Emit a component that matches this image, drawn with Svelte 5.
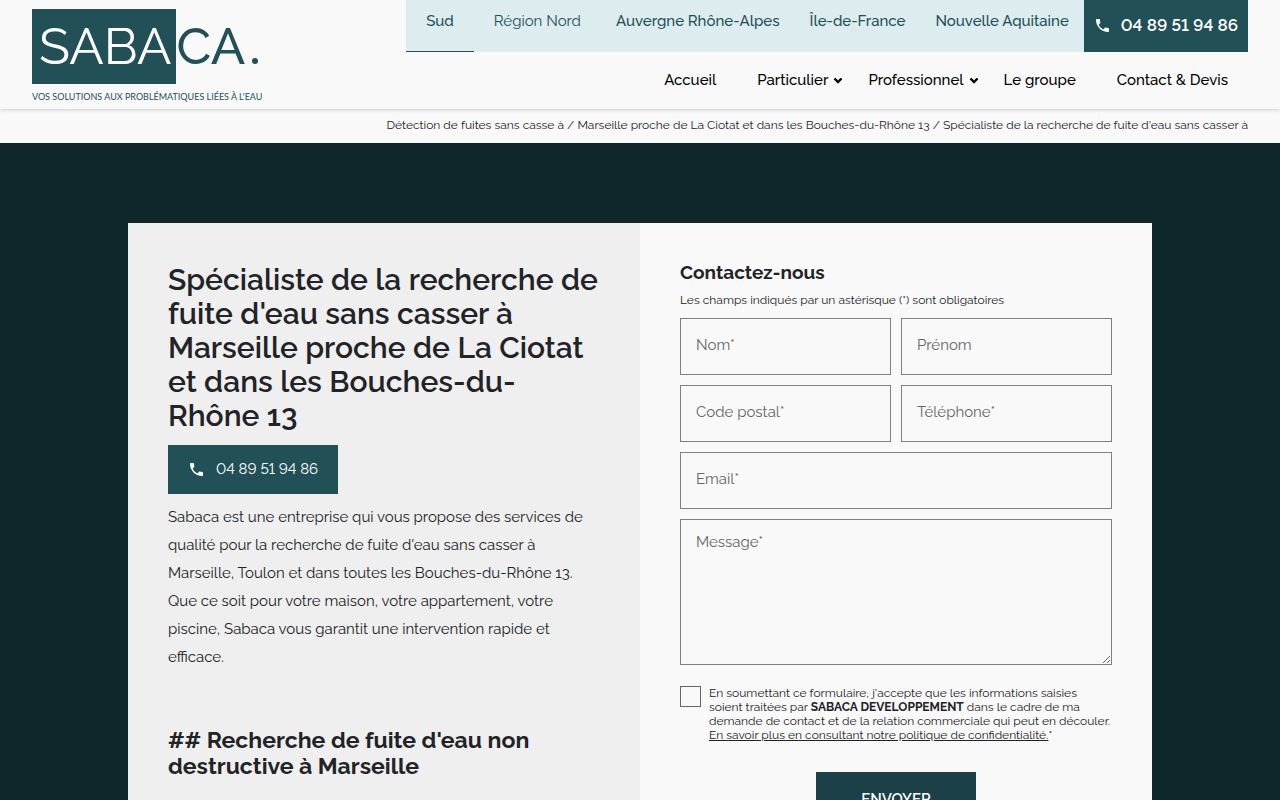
<script>
    const regions = [
        { name: 'Sud', wide: true, active: true },
        { name: 'Région Nord', wide: true },
        { name: 'Auvergne Rhône-Alpes', strong: true },
        { name: 'Île-de-France', strong: true },
        { name: 'Nouvelle Aquitaine', strong: true }
    ];

    const menu = [
        { name: 'Accueil' },
        { name: 'Particulier', sub: true },
        { name: 'Professionnel', sub: true },
        { name: 'Le groupe' },
        { name: 'Contact & Devis' }
    ];

    const fields = [
        { id: 'nom', label: 'Nom*', type: 'text' },
        { id: 'prenom', label: 'Prénom', type: 'text' },
        { id: 'cp', label: 'Code postal*', type: 'text' },
        { id: 'tel', label: 'Téléphone*', type: 'tel' },
        { id: 'email', label: 'Email*', type: 'email', full: true }
    ];

    const phone = '04 89 51 94 86';
</script>

{#snippet phoneIcon()}
    <svg class="phone-icon" viewBox="3 3 18 18" aria-hidden="true">
        <path fill="currentColor" d="M6.62 10.79c1.44 2.83 3.76 5.14 6.59 6.59l2.2-2.2c.27-.27.67-.36 1.02-.24 1.12.37 2.33.57 3.57.57.55 0 1 .45 1 1V20c0 .55-.45 1-1 1C10.61 21 3 13.39 3 4c0-.55.45-1 1-1h3.5c.55 0 1 .45 1 1 0 1.25.2 2.45.57 3.57.11.35.03.74-.25 1.02l-2.2 2.2z" />
    </svg>
{/snippet}

<header>
    <a class="logo" href="#accueil" aria-label="Sabaca">
        <span class="logo-name"><span class="logo-box">SABA</span>CA<span class="logo-dot"></span></span>
        <span class="logo-tag">VOS SOLUTIONS AUX PROBLÉMATIQUES LIÉES À L'EAU</span>
    </a>
    <div class="bars">
        <div class="top">
            <nav class="regions" aria-label="Régions">
                {#each regions as region}
                    <a href="#region" class:wide={region.wide} class:active={region.active} class:strong={region.strong}>{region.name}</a>
                {/each}
            </nav>
            <a class="call" href="tel:0489519486">{@render phoneIcon()}{phone}</a>
        </div>
        <nav class="menu" aria-label="Menu">
            {#each menu as item}
                <a href="#menu" class:sub={item.sub}>
                    {item.name}
                    {#if item.sub}
                        <svg viewBox="0 0 10 7" aria-hidden="true">
                            <path d="M1.5 1.5 5 5l3.5-3.5" fill="none" stroke="currentColor" stroke-width="2.4" />
                        </svg>
                    {/if}
                </a>
            {/each}
        </nav>
    </div>
</header>

<div class="breadcrumb">
    Détection de fuites sans casse à / Marseille proche de La Ciotat et dans les Bouches-du-Rhône 13 / Spécialiste de la recherche de fuite d'eau sans casser à
</div>

<main>
    <div class="card">
        <section class="intro">
            <h1>Spécialiste de la recherche de fuite d'eau sans casser à Marseille proche de La Ciotat et dans les Bouches-du-Rhône 13</h1>
            <a class="button" href="tel:0489519486">{@render phoneIcon()}{phone}</a>
            <p>
                Sabaca est une entreprise qui vous propose des services de qualité pour la recherche de fuite d'eau
                sans casser à Marseille, Toulon et dans toutes les Bouches-du-Rhône 13. Que ce soit pour votre maison,
                votre appartement, votre piscine, Sabaca vous garantit une intervention rapide et efficace.
            </p>
            <h2>## Recherche de fuite d'eau non destructive à Marseille</h2>
        </section>

        <section class="contact">
            <h3>Contactez-nous</h3>
            <p class="note">Les champs indiqués par un astérisque (*) sont obligatoires</p>
            <form on:submit|preventDefault>
                {#each fields as field}
                    <input id={field.id} type={field.type} placeholder={field.label} aria-label={field.label} class:full={field.full} />
                {/each}
                <textarea class="full" id="message" placeholder="Message*" aria-label="Message*"></textarea>
                <div class="consent full">
                    <input id="rgpd" type="checkbox" />
                    <label for="rgpd">
                        En soumettant ce formulaire, j'accepte que les informations saisies soient traitées par
                        <strong>SABACA DEVELOPPEMENT</strong> dans le cadre de ma demande de contact et de la relation
                        commerciale qui peut en découler.
                        <a href="#politique">En savoir plus en consultant notre politique de confidentialité.</a>*
                    </label>
                </div>
                <button class="full" type="submit">ENVOYER</button>
            </form>
        </section>
    </div>
</main>

<style>
    :global(body) {
        margin: 0;
        background: #f9f9f9;
        color: #212326;
        font-family: Raleway, Lato, sans-serif;
        font-size: 15px;
    }

    a {
        color: inherit;
        text-decoration: none;
    }

    header {
        display: flex;
        justify-content: space-between;
        padding: 0 32px;
        position: relative;
        box-shadow: 0 0 4px rgba(0, 0, 0, .25);
    }

    .logo {
        display: flex;
        flex-direction: column;
        padding-top: 9px;
        color: #225057;
    }

    .logo-name {
        font-size: 51px;
        font-weight: 500;
        line-height: 75px;
    }

    .logo-box {
        display: inline-block;
        padding: 0 5px 0 7px;
        background: #225057;
        color: #fff;
        font-weight: 400;
    }

    .logo-dot {
        display: inline-block;
        width: 6px;
        height: 6px;
        margin-left: 7px;
        border-radius: 50%;
        background: #225057;
    }

    .logo-tag {
        margin-top: 7px;
        font-family: Lato, sans-serif;
        font-size: 9px;
        line-height: 12px;
    }

    .top {
        display: flex;
        justify-content: flex-end;
        height: 52px;
    }

    .regions {
        display: flex;
        background: #dcecef;
        color: #225057;
        line-height: 42px;
    }

    .regions a {
        box-sizing: border-box;
        padding: 0 15px;
        white-space: nowrap;
    }

    .regions a.wide {
        padding: 0 20px;
    }

    .regions a.active {
        border-bottom: 1px solid #225057;
        font-weight: 500;
    }

    .regions a.strong {
        font-weight: 500;
    }

    .call {
        display: flex;
        align-items: center;
        gap: 12px;
        padding: 0 10px 2px 12px;
        box-sizing: border-box;
        background: #225057;
        color: #fff;
        font-size: 17px;
        font-weight: 600;
        font-variant-numeric: lining-nums;
        white-space: nowrap;
    }

    .phone-icon {
        width: 13px;
        height: 13px;
    }

    .menu {
        display: flex;
        justify-content: flex-end;
        color: #000;
        font-weight: 500;
        line-height: 57px;
    }

    .menu a {
        display: flex;
        align-items: center;
        padding: 0 20px 0 21px;
        white-space: nowrap;
    }

    .menu a.sub {
        gap: 5px;
        padding-right: 4px;
    }

    .menu svg {
        width: 10px;
        height: 7px;
    }

    .breadcrumb {
        padding: 0 32px 2px;
        font-size: 12px;
        line-height: 32px;
        text-align: right;
    }

    main {
        padding: 80px 10%;
        background: #0f272b;
    }

    .card {
        display: grid;
        grid-template-columns: 1fr 1fr;
        background: #f9f9f9;
    }

    .intro,
    .contact {
        padding: 40px;
    }

    .intro {
        background: #efefef;
    }

    h1 {
        margin: 0 0 12px;
        font-size: 30px;
        font-weight: 600;
        line-height: 34px;
    }

    .button {
        display: inline-flex;
        align-items: center;
        gap: 13px;
        padding: 0 20px 0 22px;
        background: #225057;
        color: #fff;
        font-variant-numeric: lining-nums;
        line-height: 49px;
    }

    .intro p {
        margin: 9px 0 56px;
        line-height: 28px;
    }

    h2 {
        margin: 0;
        font-size: 23px;
        line-height: 26px;
    }

    h3 {
        margin: 0 0 10px;
        font-size: 19px;
        line-height: 18px;
    }

    .note {
        margin: 0 0 9px;
        font-size: 12px;
        line-height: 18px;
    }

    form {
        display: grid;
        grid-template-columns: 1fr 1fr;
        gap: 10px;
    }

    form > input,
    textarea {
        box-sizing: border-box;
        width: 100%;
        height: 57px;
        padding: 0 15px 3px;
        border: 1px solid #808080;
        border-radius: 0;
        background: transparent;
        font: inherit;
    }

    textarea {
        height: 146px;
        padding: 13px 15px;
    }

    ::placeholder {
        color: #666;
    }

    .full {
        grid-column: 1 / -1;
    }

    .consent {
        display: flex;
        gap: 8px;
        margin-top: 11px;
        font-size: 12px;
        line-height: 14px;
    }

    .consent input {
        appearance: none;
        flex: none;
        width: 21px;
        height: 21px;
        margin: 0;
        border: 1px solid #666;
    }

    .consent a {
        text-decoration: underline;
    }

    button {
        justify-self: center;
        width: 160px;
        margin-top: 20px;
        border: none;
        background: #1c4047;
        color: #fff;
        font: inherit;
        font-weight: 600;
        line-height: 52px;
        cursor: pointer;
    }
</style>
